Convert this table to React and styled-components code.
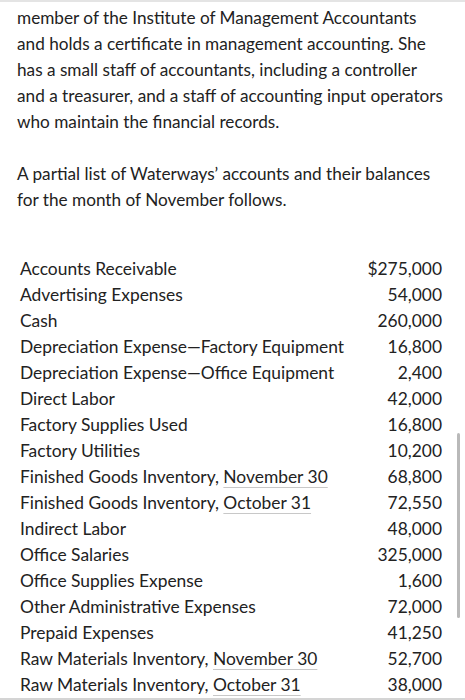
import React from "react";
import styled, { createGlobalStyle } from "styled-components";

const GlobalStyle = createGlobalStyle`
  html, body {
    margin: 0;
    padding: 0;
    background: #fff;
  }
  body {
    font-family: Lato, "Open Sans", sans-serif;
    color: #222;
  }
`;

const Page = styled.div`
  position: relative;
  width: 465px;
  height: 700px;
  box-sizing: border-box;
  border-top: 2px solid #e4e4e4;
  border-bottom: 2px solid #d4d4d4;
  overflow: hidden;
`;

const Content = styled.div`
  padding: 3px 0 0 17px;
`;

const Para = styled.p`
  margin: 0 0 26px;
  width: 427px;
  font-size: 17.2px;
  line-height: 26px;
`;

const Table = styled.div`
  margin-top: 43px;
  padding-left: 3px;
  width: 422px;
  display: flex;
  flex-direction: column;
`;

const Row = styled.div`
  display: flex;
  justify-content: space-between;
  height: 26px;
  line-height: 26px;
  font-size: 17.4px;
`;

const Label = styled.span`
  white-space: nowrap;
`;

const Amount = styled.span`
  text-align: right;
`;

const Date = styled.span`
  text-decoration: underline;
  text-decoration-color: #c8c8c8;
  text-decoration-thickness: 1px;
  text-underline-offset: 4px;
`;

const ScrollThumb = styled.div`
  position: absolute;
  left: 457px;
  top: 431px;
  width: 3px;
  height: 185px;
  border-radius: 2px;
  background: #b9b9b9;
`;

const rows = [
  ["Accounts Receivable", "", "$275,000"],
  ["Advertising Expenses", "", "54,000"],
  ["Cash", "", "260,000"],
  ["Depreciation Expense\u2014Factory Equipment", "", "16,800"],
  ["Depreciation Expense\u2014Office Equipment", "", "2,400"],
  ["Direct Labor", "", "42,000"],
  ["Factory Supplies Used", "", "16,800"],
  ["Factory Utilities", "", "10,200"],
  ["Finished Goods Inventory, ", "November 30", "68,800"],
  ["Finished Goods Inventory, ", "October 31", "72,550"],
  ["Indirect Labor", "", "48,000"],
  ["Office Salaries", "", "325,000"],
  ["Office Supplies Expense", "", "1,600"],
  ["Other Administrative Expenses", "", "72,000"],
  ["Prepaid Expenses", "", "41,250"],
  ["Raw Materials Inventory, ", "November 30", "52,700"],
  ["Raw Materials Inventory, ", "October 31", "38,000"],
];

export default function App() {
  return (
    <>
      <GlobalStyle />
      <Page>
        <Content>
          <Para>
            member of the Institute of Management Accountants and holds a
            certificate in management accounting. She has a small staff of
            accountants, including a controller and a treasurer, and a staff
            of accounting input operators who maintain the financial records.
          </Para>
          <Para>
            A partial list of Waterways’ accounts and their balances for the
            month of November follows.
          </Para>
          <Table>
            {rows.map(([label, date, amount]) => (
              <Row key={label + date}>
                <Label>
                  {label}
                  {date && <Date>{date}</Date>}
                </Label>
                <Amount>{amount}</Amount>
              </Row>
            ))}
          </Table>
        </Content>
        <ScrollThumb />
      </Page>
    </>
  );
}
